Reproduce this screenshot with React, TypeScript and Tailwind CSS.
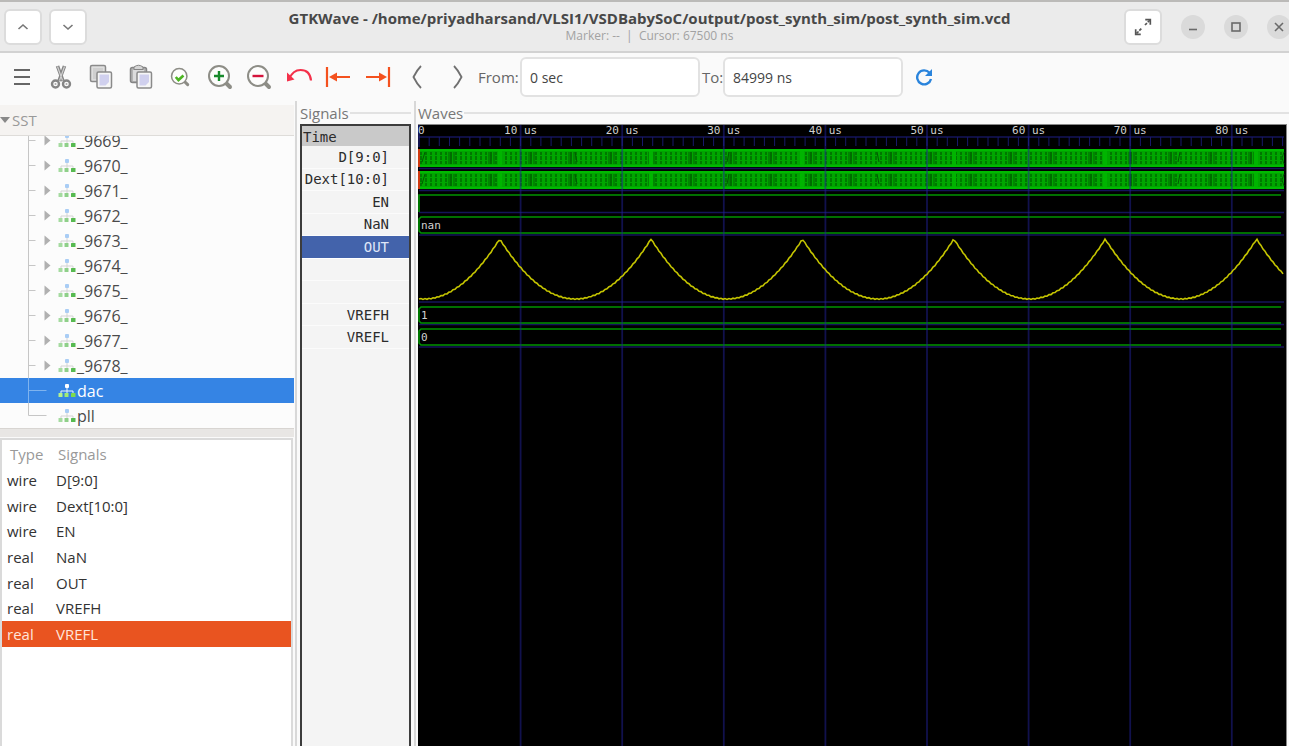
import { useState, type ReactNode } from "react";

const modules = ["_9669_", "_9670_", "_9671_", "_9672_", "_9673_", "_9674_", "_9675_", "_9676_", "_9677_", "_9678_", "dac", "pll"];

const signals = [
  { type: "wire", name: "D[9:0]" },
  { type: "wire", name: "Dext[10:0]" },
  { type: "wire", name: "EN" },
  { type: "real", name: "NaN" },
  { type: "real", name: "OUT" },
  { type: "real", name: "VREFH" },
  { type: "real", name: "VREFL" },
];

const traces = ["D[9:0]", "Dext[10:0]", "EN", "NaN", "OUT", "", "", "VREFH", "VREFL"];

/* Pixels for ten microseconds on the time axis. */
const STEP = 101.6;
const ORIGIN = 1;

function Magnifier({ children, small }: { children: ReactNode; small?: boolean }) {
  return (
    <svg viewBox="0 0 26 26" className={small ? "size-5" : "size-[26px]"} fill="none">
      <path d="M18.5 18.5l4.500 4.500" stroke="#8d8d86" strokeWidth="4" strokeLinecap="round" />
      <circle cx="12" cy="12" r="10" fill="#fdfdfc" stroke="#8d8d86" strokeWidth="2" />
      {children}
    </svg>
  );
}

function CopyIcon({ paste }: { paste?: boolean }) {
  return (
    <svg viewBox="0 0 26 26" className="size-[26px]" fill="none">
      {paste ? (
        <>
          <rect x="2.500" y="3.500" width="16" height="15" rx="2" fill="#b5b5b5" stroke="#858585" strokeWidth="1.500" />
          <rect x="5" y="6" width="11" height="11" fill="#dcdcdc" />
          <path d="M6 5.500V3q4.500-3.500 9 0v2.500z" fill="#d5d5d5" stroke="#858585" />
        </>
      ) : (
        <>
          <rect x="2.500" y="1.500" width="15" height="16" rx="1.500" fill="#dedede" stroke="#8a8a8a" strokeWidth="1.500" />
          <rect x="5" y="4" width="10" height="11" fill="#cfcfcf" />
        </>
      )}
      <rect x="9" y="8" width="14.500" height="16" rx="1.500" fill="#f6f6f6" stroke="#8a8a8a" strokeWidth="1.500" />
      <path d="M11.500 10.500h9.500v7.500l-3.500 3.500h-6z" fill="#d0d0ee" />
    </svg>
  );
}

function ScissorsIcon() {
  return (
    <svg viewBox="0 0 26 26" className="size-[26px]" fill="none" stroke="#858585">
      <path d="M9.500 2l5.500 15M16.500 2L11 17" stroke="#858585" strokeWidth="3.600" />
      <path d="M9.500 2.500l5 14M16.500 2.500l-5 14" stroke="#d0d0d0" strokeWidth="1.200" />
      <circle cx="7.500" cy="20" r="3.500" strokeWidth="2.400" />
      <circle cx="18.500" cy="20" r="3.500" strokeWidth="2.400" />
      <circle cx="7.500" cy="20" r="1" fill="#aaa" stroke="none" />
      <circle cx="18.500" cy="20" r="1" fill="#aaa" stroke="none" />
    </svg>
  );
}

function UndoIcon() {
  return (
    <svg viewBox="0 0 28 26" className="h-[26px] w-7">
      <path d="M4 15Q8 6 15.500 6 25 6 26 16.500" fill="none" stroke="#f4304a" strokeWidth="2.200" />
      <path d="M2 8.500v9l7.500-2z" fill="#f4304a" />
    </svg>
  );
}

function EdgeIcon({ right }: { right?: boolean }) {
  return (
    <svg viewBox="0 0 26 26" className={right ? "size-[26px] -scale-x-100" : "size-[26px]"}>
      <path d="M2 3v20M8 13h17" stroke="#f4511e" strokeWidth="2.200" fill="none" />
      <path d="M4 13l8-4.500v9z" fill="#f4511e" />
    </svg>
  );
}

function AngleIcon({ right }: { right?: boolean }) {
  return (
    <svg viewBox="0 0 12 26" className={right ? "h-[26px] w-3 -scale-x-100" : "h-[26px] w-3"}>
      <path d="M9 2Q5 6 1.500 13q3.500 7 7.500 11" stroke="#707070" strokeWidth="1.800" fill="none" />
    </svg>
  );
}

const tools: { label: string; icon: ReactNode }[] = [
  { label: "Menu", icon: <svg viewBox="0 0 18 18" className="size-[18px]"><path d="M1 2h16M1 9h16M1 16h16" stroke="#666" strokeWidth="1.800" /></svg> },
  { label: "Cut", icon: <ScissorsIcon /> },
  { label: "Copy", icon: <CopyIcon /> },
  { label: "Paste", icon: <CopyIcon paste /> },
  { label: "Zoom fit", icon: <Magnifier small><path d="M7.500 13l3.500 4 6.500-6" stroke="#4cb522" strokeWidth="3.400" /></Magnifier> },
  { label: "Zoom in", icon: <Magnifier><path d="M12 7v10M7 12h10" stroke="#188a2c" strokeWidth="2.400" /></Magnifier> },
  { label: "Zoom out", icon: <Magnifier><path d="M6.500 12h11" stroke="#d4143c" strokeWidth="2.400" /></Magnifier> },
  { label: "Zoom undo", icon: <UndoIcon /> },
  { label: "Zoom to start", icon: <EdgeIcon /> },
  { label: "Zoom to end", icon: <EdgeIcon right /> },
  { label: "Previous edge", icon: <AngleIcon /> },
  { label: "Next edge", icon: <AngleIcon right /> },
];

function HeaderButton({ label, children }: { label: string; children: ReactNode }) {
  return (
    <button aria-label={label} className="flex h-9 w-[38px] items-center justify-center rounded-md border-2 border-[#dcdcdc] bg-white">
      {children}
    </button>
  );
}

function WindowButton({ label, children }: { label: string; children: ReactNode }) {
  return (
    <button aria-label={label} className="flex size-6 shrink-0 items-center justify-center rounded-full bg-[#dadada]">
      <svg viewBox="0 0 12 12" className="size-3" fill="none" stroke="#6a6a6a" strokeWidth="1.600">{children}</svg>
    </button>
  );
}

function ModuleIcon({ bright }: { bright: boolean }) {
  return (
    <svg viewBox="0 0 18 18" className="size-[18px] shrink-0">
      <path d="M9 5v6M3 12V9h12v3" fill="none" stroke={bright ? "#e8f2ff" : "#d4d4d4"} />
      <rect x="7" y="2" width="4" height="4" rx="1" fill={bright ? "#fff" : "#a9cdf5"} />
      <rect x="0.500" y="11" width="4" height="4" rx="0.500" fill={bright ? "#b6f28c" : "#a5dba0"} />
      <rect x="6.500" y="11" width="4" height="4" rx="0.500" fill={bright ? "#a2ec72" : "#8fd089"} />
      <rect x="13" y="11" width="4.500" height="4" rx="0.500" fill={bright ? "#7ddc4c" : "#57ba50"} />
    </svg>
  );
}

function Header() {
  return (
    <header className="grid h-[53px] shrink-0 grid-cols-[1fr_auto_1fr] items-center border-t-2 border-b-2 border-t-[#bbbab8] border-b-[#d2d2d2] bg-[#ebebeb] pl-1">
      <div className="flex gap-[7px]">
        <HeaderButton label="Up"><svg viewBox="0 0 12 8" className="h-2 w-3"><path d="M1.500 6L6 2l4.500 4" fill="none" stroke="#777" strokeWidth="1.600" /></svg></HeaderButton>
        <HeaderButton label="Down"><svg viewBox="0 0 12 8" className="h-2 w-3"><path d="M1.500 2L6 6l4.500-4" fill="none" stroke="#777" strokeWidth="1.600" /></svg></HeaderButton>
      </div>
      <div className="self-start pt-1.5 pl-1.5 text-center">
        <h1 className="text-[15px] leading-5 font-bold text-[#484848]">GTKWave - /home/priyadharsand/VLSI1/VSDBabySoC/output/post_synth_sim/post_synth_sim.vcd</h1>
        <p className="text-xs leading-4 text-[#a2a2a2]">Marker: -- &nbsp;|&nbsp; Cursor: 67500 ns</p>
      </div>
      <div className="-mr-0.5 flex items-center justify-end gap-[19px]">
        <HeaderButton label="Full screen">
          <svg viewBox="0 0 16 16" className="size-[18px]" fill="none" stroke="#555" strokeWidth="1.500">
            <path d="M10 1.500h4.500V6M6 14.500H1.500V10" />
            <path d="M14 2L9.500 6.500M6.500 9.500L2 14" strokeDasharray="2.500 1" />
          </svg>
        </HeaderButton>
        <WindowButton label="Minimize"><path d="M2 8.500h8" /></WindowButton>
        <WindowButton label="Maximize"><rect x="2" y="2" width="8" height="8" /></WindowButton>
        <WindowButton label="Close"><path d="M2 2l8 8M10 2l-8 8" /></WindowButton>
      </div>
    </header>
  );
}

function Toolbar() {
  return (
    <div className="flex h-12 shrink-0 items-center pl-0.5 text-[15px] text-[#666]">
      <div className="grid w-[475px] shrink-0 grid-cols-12">
        {tools.map((t) => (
          <button key={t.label} aria-label={t.label} className="flex h-8 items-center justify-center">{t.icon}</button>
        ))}
      </div>
      <label htmlFor="from" className="w-[43px] shrink-0 pl-px">From:</label>
      <input id="from" defaultValue="0 sec" className="h-10 w-[180px] rounded-md border-2 border-[#e2e2e2] bg-white px-2 text-sm text-[#444]" />
      <label htmlFor="to" className="w-[23px] shrink-0 pl-0.5">To:</label>
      <input id="to" defaultValue="84999 ns" className="h-10 w-[180px] rounded-md border-2 border-[#e2e2e2] bg-white px-2 text-sm text-[#444]" />
      <button aria-label="Reload" className="ml-2.5 p-0.5">
        <svg viewBox="0 0 18 18" className="size-[18px]">
          <path d="M14.500 4.800A7 7 0 1 0 16 11" fill="none" stroke="#2a84dc" strokeWidth="2.400" />
          <path d="M17 1v7h-7z" fill="#2a84dc" />
        </svg>
      </button>
    </div>
  );
}

function ModuleTree() {
  const [selected, setSelected] = useState("dac");
  return (
    <div className="flex h-[293px] shrink-0 flex-col justify-end overflow-hidden border-t border-[#dedcd9] bg-[#fcfcfc]">
      <ul>
        {modules.map((m, i) => {
          const on = m === selected;
          const leaf = i > 9;
          const line = on ? "#7fb3ee" : "#c6c6c6";
          return (
            <li key={m}>
              <button onClick={() => setSelected(m)} className={on ? "flex h-[25px] w-full items-center bg-[#3584e4] pl-7 text-white" : "flex h-[25px] w-full items-center pl-7 text-[#4a4a4a]"}>
                <svg viewBox="0 0 30 25" className="h-[25px] w-[30px] shrink-0" fill="none">
                  <path d={i === modules.length - 1 ? "M.5 0v12.500h18" : leaf ? "M.5 0v25M.5 12.500h18" : "M.5 0v25M.5 12.500h7"} stroke={line} />
                  {!leaf && <path d="M16.500 7.500v10l6-5z" fill="#b0b0b0" />}
                </svg>
                <ModuleIcon bright={on} />
                <span className="pl-px text-base leading-5">{m}</span>
              </button>
            </li>
          );
        })}
      </ul>
    </div>
  );
}

function SignalTable() {
  const [selected, setSelected] = useState("VREFL");
  return (
    <div className="mt-px mr-px flex-1 border-2 border-b-0 border-[#dadada] bg-white">
      <table className="h-[207px] w-full border-collapse text-left text-[15px] leading-5 text-[#333]">
        <thead>
          <tr className="h-[27px] text-[#999]">
            <th className="w-12 pl-2 font-normal">Type</th>
            <th className="pl-2 font-normal">Signals</th>
          </tr>
        </thead>
        <tbody>
          {signals.map((s) => (
            <tr key={s.name} onClick={() => setSelected(s.name)} className={s.name === selected ? "bg-[#e95420] text-[#ffe4da]" : ""}>
              <td className="pl-[5px]">{s.type}</td>
              <td className="pl-1.5">{s.name}</td>
            </tr>
          ))}
        </tbody>
      </table>
    </div>
  );
}

function FrameTitle({ children }: { children: ReactNode }) {
  return (
    <h2 className="flex h-[18px] shrink-0 items-center gap-px text-[15px] leading-[18px] text-[#777]">
      {children}
      <span className="h-0.5 flex-1 bg-[#e2e2e2]" />
    </h2>
  );
}

function SignalNames() {
  return (
    <section className="flex w-[119px] shrink-0 flex-col border-l-2 border-[#d8d8d8] pt-[3px] pr-[3px] pl-[3px]">
      <FrameTitle>Signals</FrameTitle>
      <div className="mt-0.5 flex-1 border-2 border-b-0 border-[#3c3c3c] bg-[#f4f4f4] font-['DejaVu_Sans_Mono',monospace] text-sm text-[#2c2c2c]">
        <div className="h-5 bg-[#c9c9c9] pl-px leading-[22px]">Time</div>
        <ul className="grid h-[203px] grid-rows-9 text-right">
          {traces.map((t, i) => (
            <li key={i} className={t === "OUT" ? "flex items-center justify-end border-b border-white bg-[#4363ab] pr-5 text-[#dfe6f8]" : "flex items-center justify-end border-b border-[#fbfbfb] pr-5"}>{t}</li>
          ))}
        </ul>
      </div>
    </section>
  );
}

function BusTrace({ y }: { y: number }) {
  return (
    <g transform={`translate(0 ${y})`}>
      <rect x="1" y="0" width="865" height="18" fill="#00a600" />
      <rect x="1" y="3" width="865" height="12" fill="url(#bits)" />
      <rect x="1" y="3" width="865" height="12" fill="url(#beats)" />
      <path d="M1 1H866M1 17H866" stroke="#00c000" strokeWidth="1.500" />
      {[82, 233, 384, 536, 687, 838].map((x) => <rect key={x} x={x - 2} y="2" width="4" height="14" fill="#00b400" />)}
      <path d="M4 13l3-10M157 3l2 10M309 13l2-10M459 3l2 10M762 3l-2 10M866 3l-2 6 2 6" stroke="#005a00" fill="none" />
      <path d="M1 0v18" stroke="#d03a10" strokeWidth="2" />
    </g>
  );
}

function outPath() {
  const half = STEP * 0.745;
  const points: string[] = [];
  for (let x = 1; x <= 865; x += 2) {
    const cycle = (x - 6) / (2 * half);
    const t = (cycle - Math.round(cycle)) * 2;
    const ripple = x % 4 === 1 ? 0.4 : -0.4;
    points.push(`${x},${(174 - 60 * t * t + ripple).toFixed(1)}`);
  }
  return points.join(" ");
}

function WaveCanvas() {
  const majors = [1, 2, 3, 4, 5, 6, 7, 8];
  const ticks = Array.from({ length: 85 }, (_, i) => i + 1);
  return (
    <svg className="block h-full w-full" role="img" aria-label="Waveforms" fontFamily="'DejaVu Sans Mono', monospace" fontSize="11" fill="#d0d0d0">
      <defs>
        <pattern id="bits" width="5" height="12" patternUnits="userSpaceOnUse" y="3">
          <path d="M3 0v3M3 4v4M3 9v3" stroke="#007800" strokeWidth="2" />
        </pattern>
        <pattern id="beats" width="40" height="12" patternUnits="userSpaceOnUse" y="3">
          <path d="M31 0v12M36 0v12" stroke="#008600" strokeWidth="2" />
          <path d="M33 0v12" stroke="#006c00" strokeWidth="2" />
        </pattern>
      </defs>
      <path d="M1 12H866M1 43.500H866M1 65.500H866M1 87.500H866M1 110H866M1 177H866M1 199.500H866M1 222H866" stroke="#14145a" strokeWidth="1.500" />
      <path d={ticks.map((n) => `M${(ORIGIN + (n * STEP) / 10).toFixed(1)} 12v9`).join("")} stroke="#18186a" />
      <path d="M1 0v22" stroke="#26269a" />
      <BusTrace y={24} />
      <BusTrace y={46} />
      <g stroke="#009400" strokeWidth="1.600" fill="none">
        <path d="M1 87V70H863" />
        {[92, 182, 204].map((y) => <path key={y} d={`M863 ${y}H3L1 ${y + 2}V${y + 14}l2 2H863`} />)}
      </g>
      {majors.map((n) => (
        <g key={n}>
          <line x1={ORIGIN + n * STEP} x2={ORIGIN + n * STEP} y1="0" y2="100%" stroke="#22229a" strokeOpacity="0.5" strokeWidth="1.800" />
          <text x={ORIGIN + n * STEP} y="9" textAnchor="middle">{n * 10} us</text>
        </g>
      ))}
      <text x="0" y="9">0</text>
      <text x="3" y="104">nan</text>
      <text x="3" y="194">1</text>
      <text x="3" y="216">0</text>
      <polyline points={outPath()} fill="none" stroke="#c4c400" strokeWidth="1.600" />
    </svg>
  );
}

export default function App() {
  return (
    <div className="flex h-screen flex-col overflow-hidden bg-[#fafafa] font-['Open_Sans','Noto_Sans',sans-serif]">
      <Header />
      <Toolbar />
      <main className="flex min-h-0 flex-1">
        <aside className="flex w-[295px] shrink-0 flex-col pt-1 pr-px">
          <h2 className="flex h-[30px] shrink-0 items-center gap-0.5 bg-[#f5f3f1] text-[15px] text-[#999]">
            <svg viewBox="0 0 10 6" className="h-1.5 w-2.5"><path d="M0 0h10L5 6z" fill="#888" /></svg>
            SST
          </h2>
          <ModuleTree />
          <div className="h-[9px] shrink-0 border-t border-[#d8d5d2] bg-[#e8e6e4]" />
          <SignalTable />
        </aside>
        <SignalNames />
        <section className="flex min-w-0 flex-1 flex-col border-l-2 border-[#d8d8d8] pt-[3px]">
          <div className="pl-0.5"><FrameTitle>Waves</FrameTitle></div>
          <div className="mt-0.5 mr-0.5 ml-0.5 min-h-0 flex-1 border-t border-r border-[#888] bg-black">
            <WaveCanvas />
          </div>
        </section>
      </main>
    </div>
  );
}
